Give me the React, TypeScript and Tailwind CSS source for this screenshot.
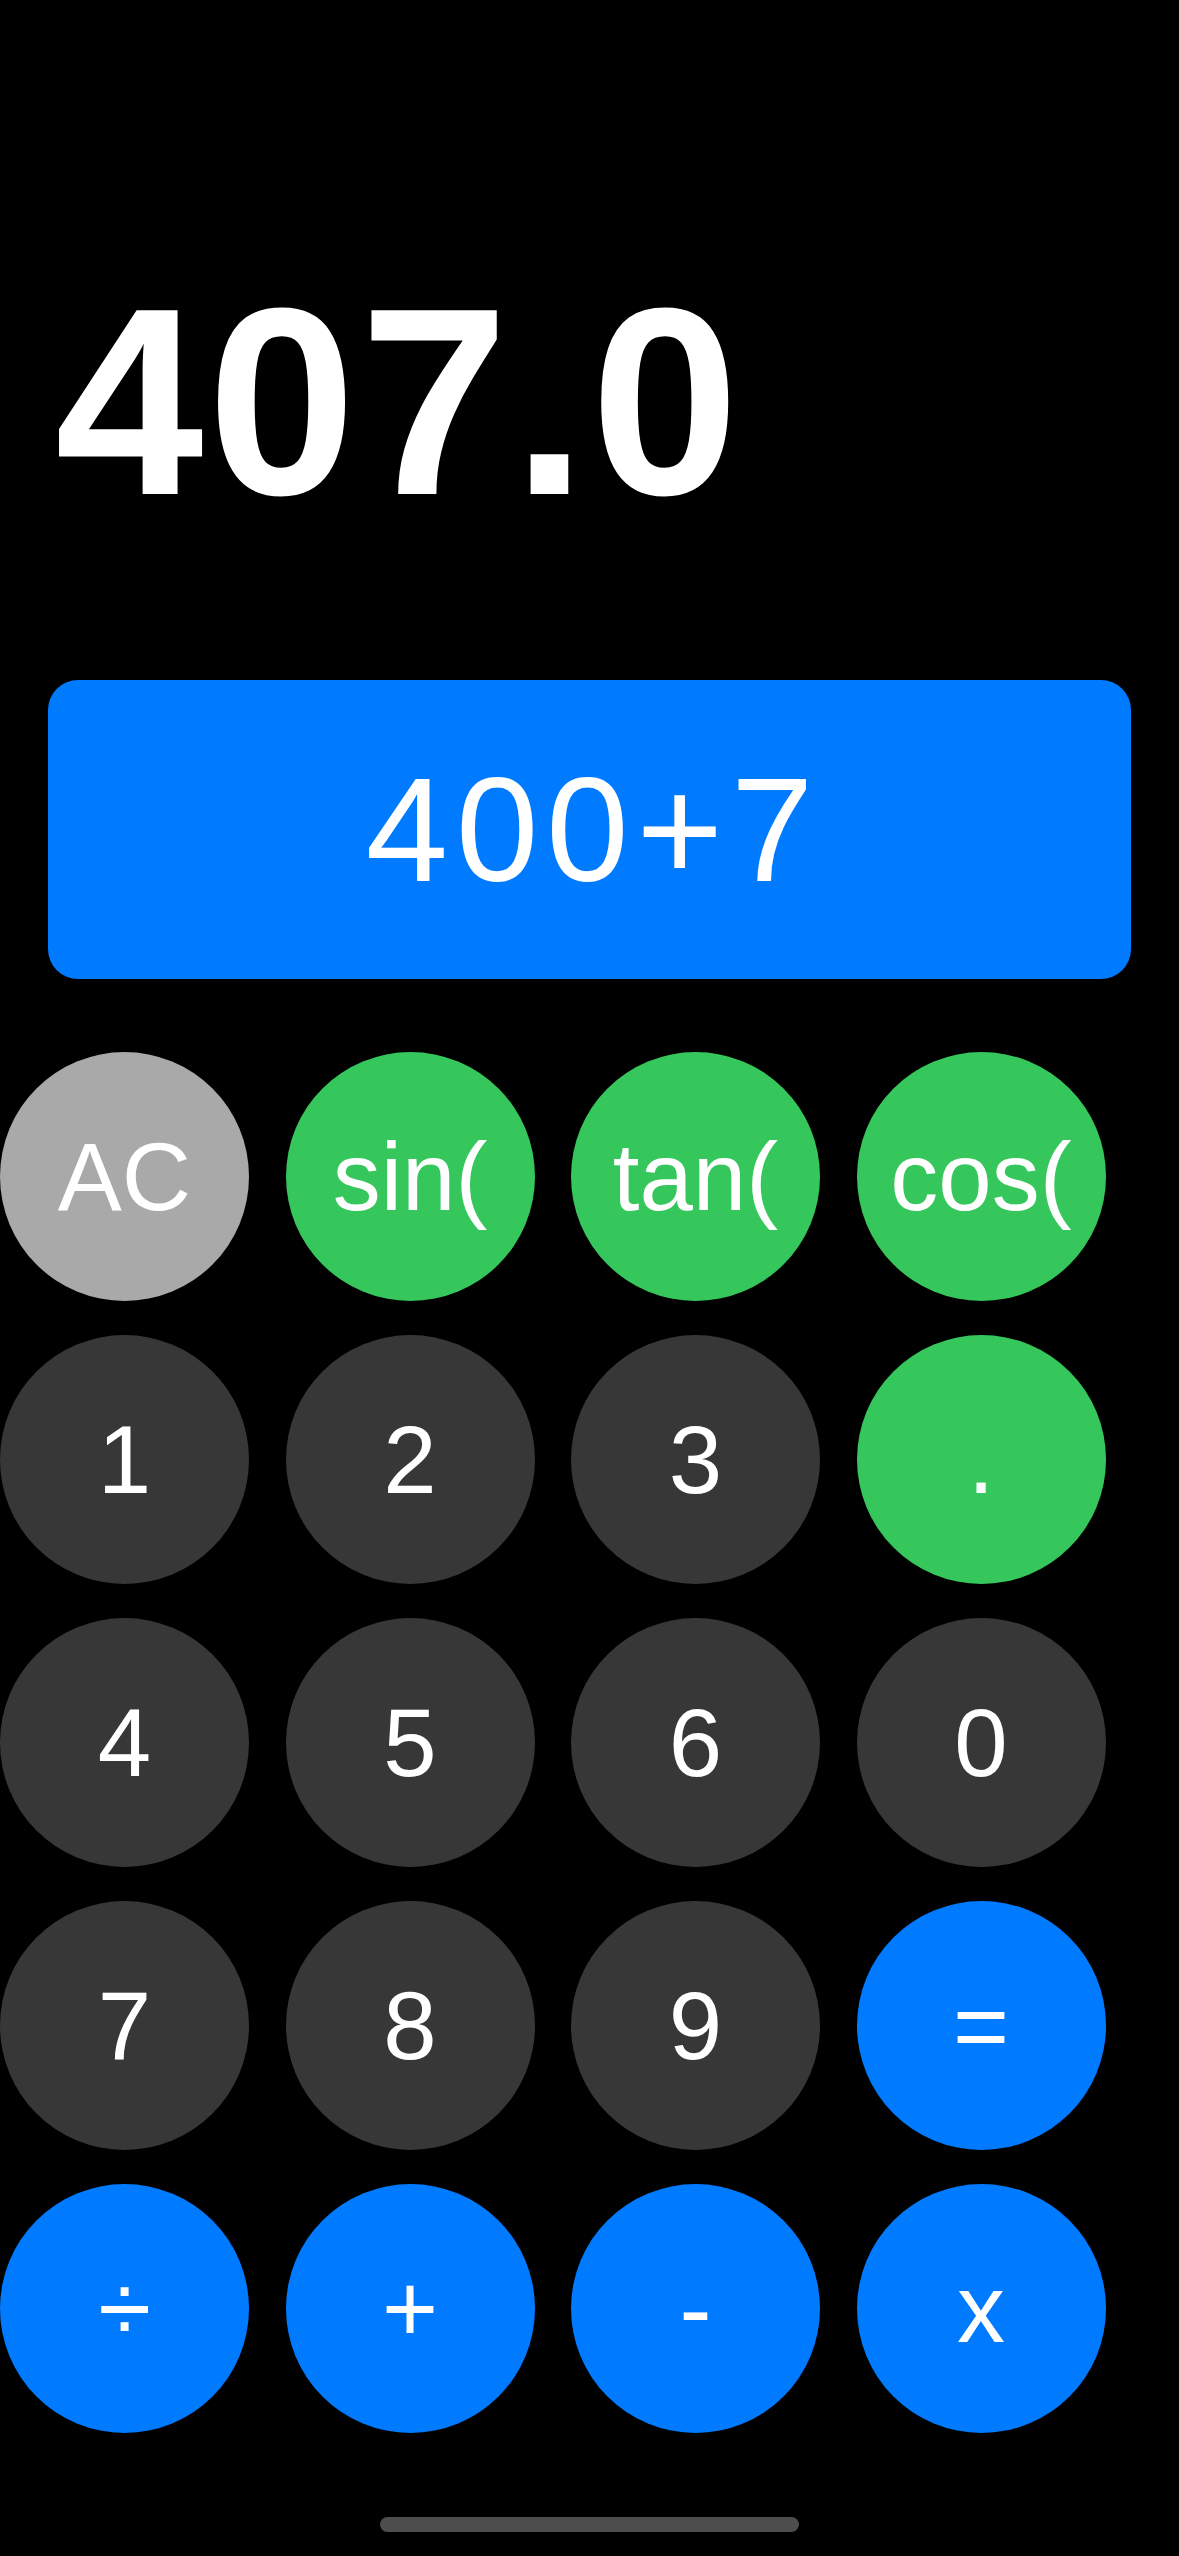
import React from 'react'

// key definitions, row by row
type Key = {
    label: string;
    color: string;
};

const keys: Key[] = [
    { label: "AC", color: "bg-[#a9a9a9]" },
    { label: "sin(", color: "bg-[#36c75c]" },
    { label: "tan(", color: "bg-[#36c75c]" },
    { label: "cos(", color: "bg-[#36c75c]" },
    { label: "1", color: "bg-[#373737]" },
    { label: "2", color: "bg-[#373737]" },
    { label: "3", color: "bg-[#373737]" },
    { label: ".", color: "bg-[#36c75c]" },
    { label: "4", color: "bg-[#373737]" },
    { label: "5", color: "bg-[#373737]" },
    { label: "6", color: "bg-[#373737]" },
    { label: "0", color: "bg-[#373737]" },
    { label: "7", color: "bg-[#373737]" },
    { label: "8", color: "bg-[#373737]" },
    { label: "9", color: "bg-[#373737]" },
    { label: "=", color: "bg-[#007aff]" },
    { label: "÷", color: "bg-[#007aff]" },
    { label: "+", color: "bg-[#007aff]" },
    { label: "-", color: "bg-[#007aff]" },
    { label: "x", color: "bg-[#007aff]" },
];

export default function App() {
    return (
        <div className="w-[1179px] h-[2556px] bg-black text-white flex flex-col font-['Liberation_Sans',Arial,sans-serif]">
            {/* Result */}
            <div className="pt-[268px] pl-[55px] text-[267px] font-bold leading-none tracking-[4px]">
                407.0
            </div>

            {/* Expression */}
            <div className="mt-[145px] mx-[48px] h-[299px] rounded-[30px] bg-[#007aff] flex items-center justify-center pl-[8px] text-[148px] leading-none tracking-[8px]">
                400+7
            </div>

            {/* Keypad */}
            <div className="mt-[73px] grid grid-cols-[repeat(4,249px)] gap-x-[36.5px] gap-y-[34px]">
                {keys.map((k) => (
                    <button
                        key={k.label}
                        className={`${k.color} w-[249px] h-[249px] rounded-full flex items-center justify-center text-[96px] leading-none text-white`}
                    >
                        {k.label}
                    </button>
                ))}
            </div>

            {/* Home indicator */}
            <div className="mt-auto mb-[24px] mx-auto w-[419px] h-[15px] rounded-full bg-[#4d4d4d]"></div>
        </div>
    );
}
